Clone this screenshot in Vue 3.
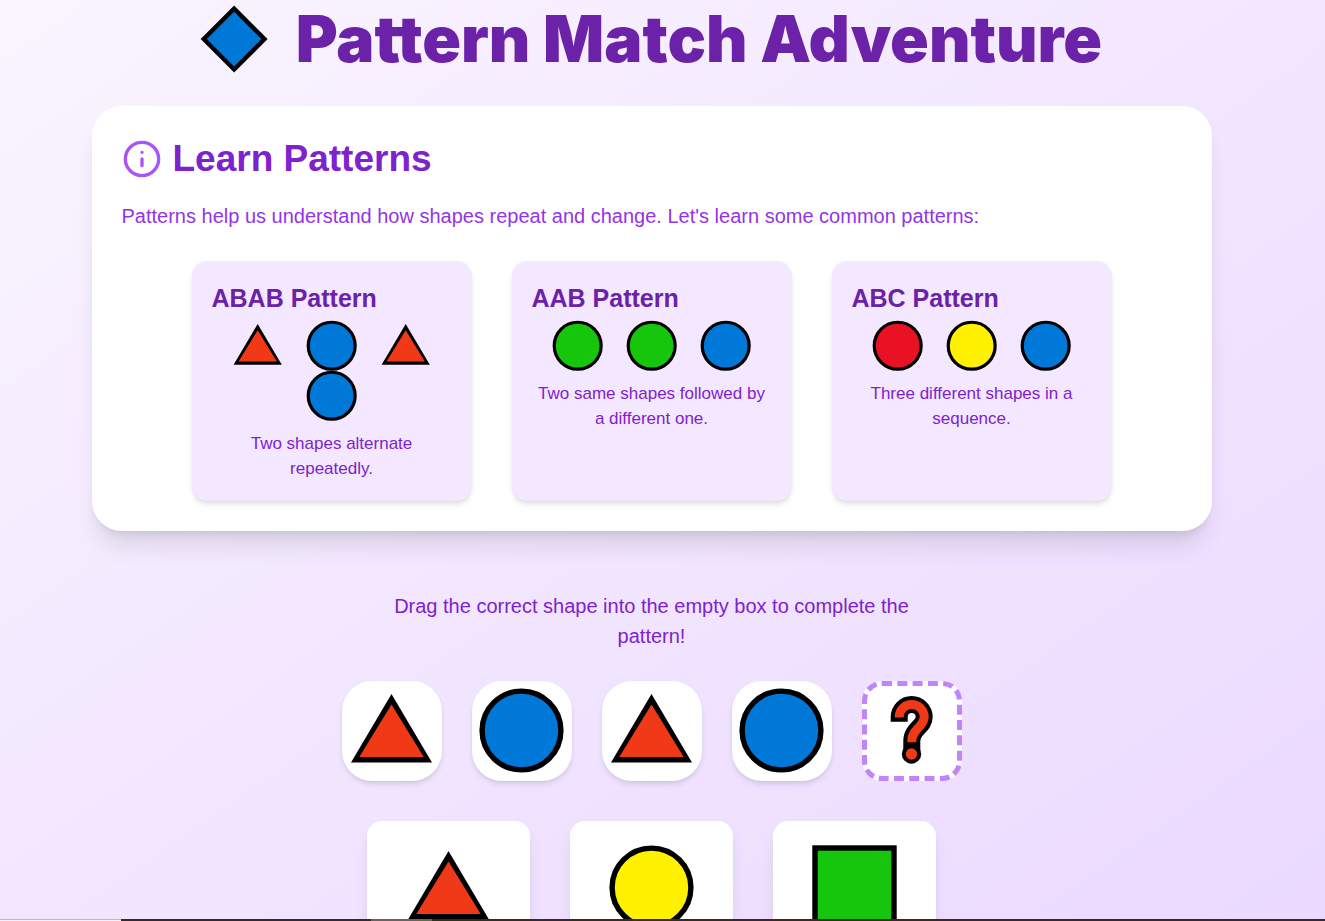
<script setup>
import { h } from 'vue'

const colors = {
  blue: '#0078d7',
  orange: '#f03a17',
  green: '#16c60c',
  yellow: '#fff100',
  red: '#e81224',
}

const Shape = ({ kind, color }) => {
  const fill = colors[color]
  const parts = {
    circle: () => [
      h('circle', { cx: 49.5, cy: 49.5, r: 39.4, fill, stroke: '#000', 'stroke-width': 5.4 }),
    ],
    triangle: () => [
      h('path', { d: 'M49.5 13L9 81.4H90Z', fill: '#000' }),
      h('path', { d: 'M49.5 23.5L17.3 76H81.7Z', fill }),
    ],
    square: () => [
      h('rect', { x: 10, y: 10, width: 79, height: 79, fill, stroke: '#000', 'stroke-width': 5.4 }),
    ],
    diamond: () => [
      h('path', { d: 'M49.5 7.5L91.5 49.5L49.5 91.5L7.5 49.5Z', fill: '#000' }),
      h('path', { d: 'M49.5 15.3L83.7 49.5L49.5 83.7L15.3 49.5Z', fill }),
    ],
    question: () => [
      h('path', {
        d: 'M37.2 40.7V36A12.5 12.5 0 0 1 62.2 36C62.2 46 49.8 47.5 49.8 60V71',
        fill: 'none', stroke: '#000', 'stroke-width': 17,
      }),
      h('circle', { cx: 49.5, cy: 73, r: 9.7, fill: '#000' }),
      h('path', {
        d: 'M37.2 36.4V36A12.5 12.5 0 0 1 62.2 36C62.2 46 49.8 47.5 49.8 60V61.3',
        fill: 'none', stroke: fill, 'stroke-width': 9,
      }),
      h('circle', { cx: 49.5, cy: 73, r: 5.7, fill }),
    ],
  }
  return h('svg', { viewBox: '8 8 84 84', 'aria-hidden': 'true' }, parts[kind]())
}
Shape.props = ['kind', 'color']

const triangle = { kind: 'triangle', color: 'orange' }
const circle = (color) => ({ kind: 'circle', color })

const lessons = [
  {
    title: 'ABAB Pattern',
    shapes: [triangle, circle('blue'), triangle, circle('blue')],
    text: 'Two shapes alternate repeatedly.',
  },
  {
    title: 'AAB Pattern',
    shapes: [circle('green'), circle('green'), circle('blue')],
    text: 'Two same shapes followed by a different one.',
  },
  {
    title: 'ABC Pattern',
    shapes: [circle('red'), circle('yellow'), circle('blue')],
    text: 'Three different shapes in a sequence.',
  },
]

const sequence = [triangle, circle('blue'), triangle, circle('blue')]
const options = [triangle, circle('yellow'), { kind: 'square', color: 'green' }]
</script>

<template>
  <div class="page">
    <main class="content">
      <h1 class="title">
        <Shape class="title-shape" kind="diamond" color="blue" />
        <span>Pattern Match Adventure</span>
      </h1>

      <section class="learn">
        <h2 class="learn-title">
          <svg class="info" viewBox="0 0 24 24" aria-hidden="true">
            <circle cx="12" cy="12" r="10" />
            <path d="M12 8h.01M12 12v4" />
          </svg>
          Learn Patterns
        </h2>
        <p class="intro">Patterns help us understand how shapes repeat and change. Let's learn some common patterns:</p>
        <div class="lessons">
          <article v-for="lesson in lessons" :key="lesson.title" class="lesson">
            <h3>{{ lesson.title }}</h3>
            <div class="lesson-shapes">
              <Shape v-for="(s, i) in lesson.shapes" :key="i" class="small-shape" :kind="s.kind" :color="s.color" />
            </div>
            <p>{{ lesson.text }}</p>
          </article>
        </div>
      </section>

      <p class="instruction">Drag the correct shape into the empty box to complete the pattern!</p>

      <div class="sequence">
        <div v-for="(s, i) in sequence" :key="i" class="tile">
          <Shape class="large-shape" :kind="s.kind" :color="s.color" />
        </div>
        <div class="tile tile-empty">
          <Shape class="large-shape" kind="question" color="orange" />
        </div>
      </div>

      <div class="options">
        <button
          v-for="s in options"
          :key="s.kind"
          class="option"
          type="button"
          draggable="true"
          :aria-label="`${s.color} ${s.kind}`"
        >
          <Shape class="large-shape" :kind="s.kind" :color="s.color" />
        </button>
      </div>
    </main>

    <div class="taskbar">
      <div class="taskbar-start"></div>
      <div class="taskbar-active"></div>
    </div>
  </div>
</template>

<style>
body {
  margin: 0;
}
</style>

<style scoped>
.page {
  position: relative;
  box-sizing: border-box;
  height: 100vh;
  overflow: hidden;
  padding-right: 22px;
  background: linear-gradient(to bottom right, #faf5ff, #f3e8ff 45%, #e9d5ff 115%);
  font-family: "Liberation Sans", Arial, sans-serif;
  font-size: 20px;
  line-height: 30px;
}

.content {
  display: flex;
  flex-direction: column;
  align-items: center;
}

h1,
h2,
h3,
p {
  margin: 0;
}

svg {
  display: block;
  flex: none;
  overflow: visible;
}

.title {
  display: flex;
  align-items: center;
  gap: 28px;
  margin-bottom: 28px;
  color: #6b21a8;
  font-family: "Arial Black", Inter, "Liberation Sans", sans-serif;
  font-size: 64px;
  font-weight: 900;
  line-height: 78px;
  white-space: nowrap;
}

.title-shape {
  width: 67px;
  height: 67px;
}

.learn {
  box-sizing: border-box;
  width: 100%;
  max-width: 1120px;
  padding: 30px;
  border-radius: 30px;
  background: #fff;
  box-shadow: 0 20px 25px -5px rgba(0, 0, 0, 0.1), 0 8px 10px -6px rgba(0, 0, 0, 0.1);
}

.learn-title {
  display: flex;
  align-items: center;
  gap: 11px;
  margin-bottom: 20px;
  color: #7e22ce;
  font-size: 37px;
  line-height: 45px;
}

.info {
  width: 40px;
  height: 40px;
  fill: none;
  stroke: #a855f7;
  stroke-width: 2;
  stroke-linecap: round;
}

.intro {
  margin-bottom: 30px;
  color: #9333ea;
}

.lessons {
  display: flex;
  justify-content: center;
  gap: 40px;
}

.lesson {
  box-sizing: border-box;
  width: 280px;
  padding: 20px;
  border-radius: 15px;
  background: #f3e8ff;
  box-shadow: 0 4px 6px -1px rgba(0, 0, 0, 0.1), 0 2px 4px -2px rgba(0, 0, 0, 0.1);
}

.lesson h3 {
  margin-bottom: 5px;
  color: #6b21a8;
  font-size: 25px;
  line-height: 35px;
}

.lesson p {
  margin-top: 10px;
  color: #7e22ce;
  font-size: 17px;
  line-height: 25px;
  text-align: center;
}

.lesson-shapes {
  display: flex;
  flex-wrap: wrap;
  justify-content: center;
  column-gap: 24px;
}

.small-shape {
  width: 50px;
  height: 50px;
}

.large-shape {
  width: 84px;
  height: 84px;
}

.instruction {
  max-width: 560px;
  margin: 60px 0 30px;
  color: #7e22ce;
  text-align: center;
}

.sequence {
  display: flex;
  gap: 30px;
  margin-bottom: 40px;
}

.tile {
  box-sizing: border-box;
  display: flex;
  align-items: center;
  justify-content: center;
  width: 100px;
  height: 100px;
  border-radius: 30px;
  background: #fff;
  box-shadow: 0 4px 6px -1px rgba(0, 0, 0, 0.1), 0 2px 4px -2px rgba(0, 0, 0, 0.1);
}

.tile-empty {
  border: 5px dashed #c084fc;
  border-radius: 20px;
  box-shadow: none;
}

.options {
  display: flex;
  gap: 40px;
}

.option {
  display: flex;
  justify-content: center;
  min-width: 163px;
  padding: 25px 30px;
  border: 0;
  border-radius: 15px;
  background: #fff;
  box-shadow: 0 10px 15px -3px rgba(0, 0, 0, 0.1), 0 4px 6px -4px rgba(0, 0, 0, 0.1);
  cursor: grab;
}

.taskbar {
  position: absolute;
  right: 0;
  bottom: 0;
  left: 0;
  display: flex;
  gap: 250px;
  height: 2px;
  background: #3a2824;
}

.taskbar-start {
  box-sizing: border-box;
  width: 121px;
  border-top: 1px solid #bdb9bd;
  background: #f3f1f3;
}

.taskbar-active {
  width: 61px;
  background: #6f615d;
}
</style>
